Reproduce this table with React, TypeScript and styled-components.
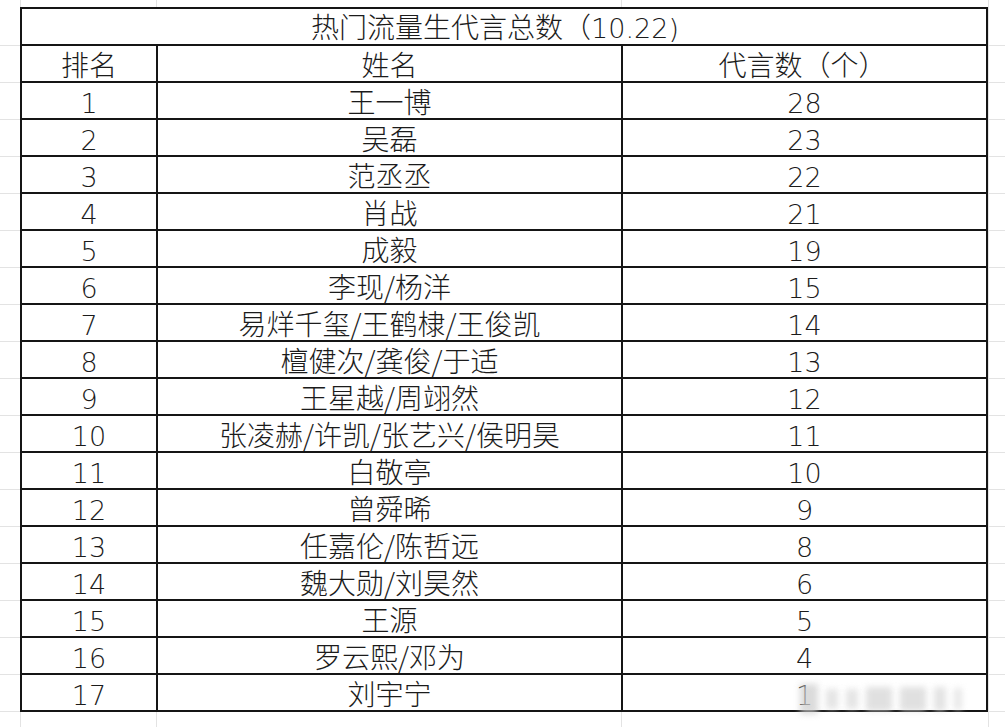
import React from "react";
import styled, { createGlobalStyle } from "styled-components";

const Global = createGlobalStyle`
  html, body { margin: 0; padding: 0; background: #fff; }
  body { font-family: "DejaVu Sans", "Noto Sans CJK SC", sans-serif; }
`;

const Page = styled.div`
  position: relative;
  width: 1005px;
  height: 727px;
  overflow: hidden;
  box-sizing: border-box;
  padding: 7px 0 0 20px;
  background-color: #fff;
  background-image:
    linear-gradient(to right, transparent 156px, #e3e3e3 156px, #e3e3e3 157px, transparent 157px),
    linear-gradient(to right, transparent 621px, #e3e3e3 621px, #e3e3e3 622px, transparent 622px),
    linear-gradient(to right, transparent 20px, #e3e3e3 20px, #e3e3e3 21px, transparent 21px),
    linear-gradient(to right, transparent 988px, #e3e3e3 988px, #e3e3e3 989px, transparent 989px),
    repeating-linear-gradient(to bottom, transparent 0, transparent 36px, #e3e3e3 36px, #e3e3e3 37px);
  background-position: 0 0, 0 0, 0 0, 0 0, 0 9px;
`;

const Table = styled.table`
  position: relative;
  border-collapse: collapse;
  table-layout: fixed;
  width: 966px;
  background: #fff;
  color: #1b1b1b;
`;

const Cell = styled.td`
  border: 2px solid #151515;
  padding: 0;
  vertical-align: top;
`;

const CellText = styled.div<{ $shift?: number }>`
  box-sizing: border-box;
  height: 35px;
  padding-top: 6px;
  padding-right: ${(p) => p.$shift ?? 0}px;
  display: flex;
  align-items: center;
  justify-content: center;
  line-height: 1;
  font-family: "DejaVu Sans", "Noto Sans CJK SC", sans-serif;
  font-size: 27px;
  font-weight: 200;
  white-space: nowrap;
`;

const Han = styled.span`
  padding-bottom: 6px;
  font-family: "Noto Sans CJK SC", sans-serif;
  font-size: 28px;
  font-weight: 300;
  line-height: 1;
`;

const Latin = styled.span`
  font-family: "DejaVu Sans", sans-serif;
  font-size: 27px;
  font-weight: 200;
`;

const Row = styled.tr`
  height: 37px;
`;

const Watermark = styled.div`
  position: absolute;
  left: 800px;
  top: 680px;
  width: 200px;
  height: 38px;
  display: flex;
  align-items: center;
  gap: 8px;
  pointer-events: none;
`;

const Blob = styled.span<{ $w: number; $h: number; $c: string }>`
  display: block;
  width: ${(p) => p.$w}px;
  height: ${(p) => p.$h}px;
  background: ${(p) => p.$c};
  filter: blur(3px);
  opacity: 0.75;
`;

const rows: [string, string, string][] = [
  ["1", "王一博", "28"],
  ["2", "吴磊", "23"],
  ["3", "范丞丞", "22"],
  ["4", "肖战", "21"],
  ["5", "成毅", "19"],
  ["6", "李现/杨洋", "15"],
  ["7", "易烊千玺/王鹤棣/王俊凯", "14"],
  ["8", "檀健次/龚俊/于适", "13"],
  ["9", "王星越/周翊然", "12"],
  ["10", "张凌赫/许凯/张艺兴/侯明昊", "11"],
  ["11", "白敬亭", "10"],
  ["12", "曾舜晞", "9"],
  ["13", "任嘉伦/陈哲远", "8"],
  ["14", "魏大勋/刘昊然", "6"],
  ["15", "王源", "5"],
  ["16", "罗云熙/邓为", "4"],
  ["17", "刘宇宁", "1"],
];

export default function App() {
  return (
    <>
      <Global />
      <Page>
        <Table>
          <colgroup>
            <col style={{ width: 136 }} />
            <col style={{ width: 465 }} />
            <col style={{ width: 365 }} />
          </colgroup>
          <tbody>
            <Row>
              <Cell colSpan={3}>
                <CellText $shift={18}>
                  <Han>
                    热门流量生代言总数（<Latin>10.22)</Latin>
                  </Han>
                </CellText>
              </Cell>
            </Row>
            <Row>
              <Cell><CellText><Han>排名</Han></CellText></Cell>
              <Cell><CellText><Han>姓名</Han></CellText></Cell>
              <Cell><CellText $shift={4}><Han>代言数（个）</Han></CellText></Cell>
            </Row>
            {rows.map(([r, n, c]) => (
              <Row key={r}>
                <Cell><CellText>{r}</CellText></Cell>
                <Cell><CellText><Han>{n}</Han></CellText></Cell>
                <Cell><CellText>{c}</CellText></Cell>
              </Row>
            ))}
          </tbody>
        </Table>
        <Watermark>
          <Blob $w={18} $h={30} $c="#cfcfcf" />
          <Blob $w={12} $h={20} $c="#dcdcdc" />
          <Blob $w={12} $h={20} $c="#dcdcdc" />
          <Blob $w={26} $h={24} $c="#d6d6d6" />
          <Blob $w={26} $h={24} $c="#d6d6d6" />
          <Blob $w={12} $h={24} $c="#dadada" />
          <Blob $w={8} $h={22} $c="#e0e0e0" />
        </Watermark>
      </Page>
    </>
  );
}
